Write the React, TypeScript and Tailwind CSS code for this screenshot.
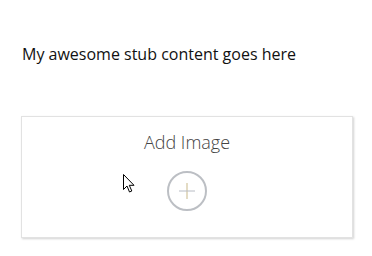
import React from "react";

export default function App() {
  return (
    <div className="relative w-[372px] h-[256px] bg-white" style={{ fontFamily: '"Open Sans", sans-serif' }}>
      <div className="pt-[42px] pl-[22px] text-[16px] leading-[24px] text-[#111]">
        My awesome stub content goes here
      </div>
      <div className="mt-[50px] ml-[21px] w-[332px] h-[122px] border border-[#e2e2e2] shadow-[1px_1px_2px_rgba(0,0,0,0.18)] flex flex-col items-center">
        <div className="mt-[12px] text-[18px] leading-[26px] font-light text-[#444]">Add Image</div>
        <div className="mt-[16px] w-[40px] h-[40px] rounded-full border-2 border-[#bcbfc4] flex items-center justify-center">
          <svg width="18" height="18" viewBox="0 0 18 18">
            <line x1="9" y1="1" x2="9" y2="17" stroke="#c9b98a" strokeWidth="1" />
            <line x1="1" y1="9" x2="17" y2="9" stroke="#b8bcc4" strokeWidth="1" />
          </svg>
        </div>
      </div>
      <svg className="absolute left-[123px] top-[174px]" width="13" height="20" viewBox="0 0 13 20">
        <path d="M0.5 0.5 L0.5 15.5 L4 12 L6.5 18 L8.8 17 L6.3 11.3 L11 11.3 Z" fill="white" stroke="black" strokeWidth="1" strokeLinejoin="miter" />
      </svg>
    </div>
  );
}
